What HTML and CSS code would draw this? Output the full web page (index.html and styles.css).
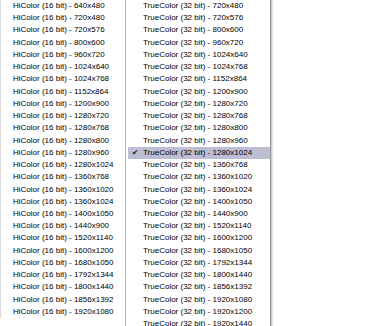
FILE: index.html
```html
<!DOCTYPE html>
<html>
<head>
<meta charset="utf-8">
<link rel="stylesheet" href="styles.css">
</head>
<body>
<div class="screen">
  <ul class="menu menu-main">
    <li class="item">HiColor (16 bit) - 640x480</li>
    <li class="item">HiColor (16 bit) - 720x480</li>
    <li class="item">HiColor (16 bit) - 720x576</li>
    <li class="item">HiColor (16 bit) - 800x600</li>
    <li class="item">HiColor (16 bit) - 960x720</li>
    <li class="item">HiColor (16 bit) - 1024x640</li>
    <li class="item">HiColor (16 bit) - 1024x768</li>
    <li class="item">HiColor (16 bit) - 1152x864</li>
    <li class="item">HiColor (16 bit) - 1200x900</li>
    <li class="item">HiColor (16 bit) - 1280x720</li>
    <li class="item">HiColor (16 bit) - 1280x768</li>
    <li class="item">HiColor (16 bit) - 1280x800</li>
    <li class="item">HiColor (16 bit) - 1280x960</li>
    <li class="item">HiColor (16 bit) - 1280x1024</li>
    <li class="item">HiColor (16 bit) - 1360x768</li>
    <li class="item">HiColor (16 bit) - 1360x1020</li>
    <li class="item">HiColor (16 bit) - 1360x1024</li>
    <li class="item">HiColor (16 bit) - 1400x1050</li>
    <li class="item">HiColor (16 bit) - 1440x900</li>
    <li class="item">HiColor (16 bit) - 1520x1140</li>
    <li class="item">HiColor (16 bit) - 1600x1200</li>
    <li class="item">HiColor (16 bit) - 1680x1050</li>
    <li class="item">HiColor (16 bit) - 1792x1344</li>
    <li class="item">HiColor (16 bit) - 1800x1440</li>
    <li class="item">HiColor (16 bit) - 1856x1392</li>
    <li class="item">HiColor (16 bit) - 1920x1080</li>
  </ul>
  <ul class="menu menu-sub">
    <li class="item">TrueColor (32 bit) - 720x480</li>
    <li class="item">TrueColor (32 bit) - 720x576</li>
    <li class="item">TrueColor (32 bit) - 800x600</li>
    <li class="item">TrueColor (32 bit) - 960x720</li>
    <li class="item">TrueColor (32 bit) - 1024x640</li>
    <li class="item">TrueColor (32 bit) - 1024x768</li>
    <li class="item">TrueColor (32 bit) - 1152x864</li>
    <li class="item">TrueColor (32 bit) - 1200x900</li>
    <li class="item">TrueColor (32 bit) - 1280x720</li>
    <li class="item">TrueColor (32 bit) - 1280x768</li>
    <li class="item">TrueColor (32 bit) - 1280x800</li>
    <li class="item">TrueColor (32 bit) - 1280x960</li>
    <li class="item is-checked is-active"><span class="check">&#10004;</span>TrueColor (32 bit) - 1280x1024</li>
    <li class="item">TrueColor (32 bit) - 1360x768</li>
    <li class="item">TrueColor (32 bit) - 1360x1020</li>
    <li class="item">TrueColor (32 bit) - 1360x1024</li>
    <li class="item">TrueColor (32 bit) - 1400x1050</li>
    <li class="item">TrueColor (32 bit) - 1440x900</li>
    <li class="item">TrueColor (32 bit) - 1520x1140</li>
    <li class="item">TrueColor (32 bit) - 1600x1200</li>
    <li class="item">TrueColor (32 bit) - 1680x1050</li>
    <li class="item">TrueColor (32 bit) - 1792x1344</li>
    <li class="item">TrueColor (32 bit) - 1800x1440</li>
    <li class="item">TrueColor (32 bit) - 1856x1392</li>
    <li class="item">TrueColor (32 bit) - 1920x1080</li>
    <li class="item">TrueColor (32 bit) - 1920x1200</li>
    <li class="item">TrueColor (32 bit) - 1920x1440</li>
  </ul>
</div>
</body>
</html>
```
FILE: styles.css
```css
html, body {
  margin: 0;
  padding: 0;
  background: #ffffff;
  height: 100%;
  overflow: hidden;
}

.screen {
  display: flex;
  align-items: flex-start;
  height: 326px;
  overflow: hidden;
  font-family: "Liberation Sans", Arial, sans-serif;
  font-size: 8px;
  color: #000000;
}

.menu {
  list-style: none;
  margin: 0;
  padding: 0;
}

.menu-main {
  width: 125px;
  box-sizing: border-box;
  border-left: 1px solid #dcdcdc;
  padding-left: 12px;
}

.menu-sub {
  width: 142px;
  box-sizing: content-box;
  border-left: 1px solid #b4b4b4;
  border-right: 1px solid #9a9a9a;
  box-shadow: 1px 0 0 #c8c8c8, 2px 0 0 #e6e6e6;
  padding: 0 0 0 2px;
  height: 340px;
}

.menu-sub .item {
  padding-left: 15px;
}

.item {
  position: relative;
  height: 12.24px;
  line-height: 12.24px;
  white-space: nowrap;
}

.item.is-active {
  background: #bdbdd4;
}

.check {
  position: absolute;
  left: 4px;
  top: 0;
  font-size: 7.5px;
  font-family: "DejaVu Sans", sans-serif;
  color: #111111;
}
```
